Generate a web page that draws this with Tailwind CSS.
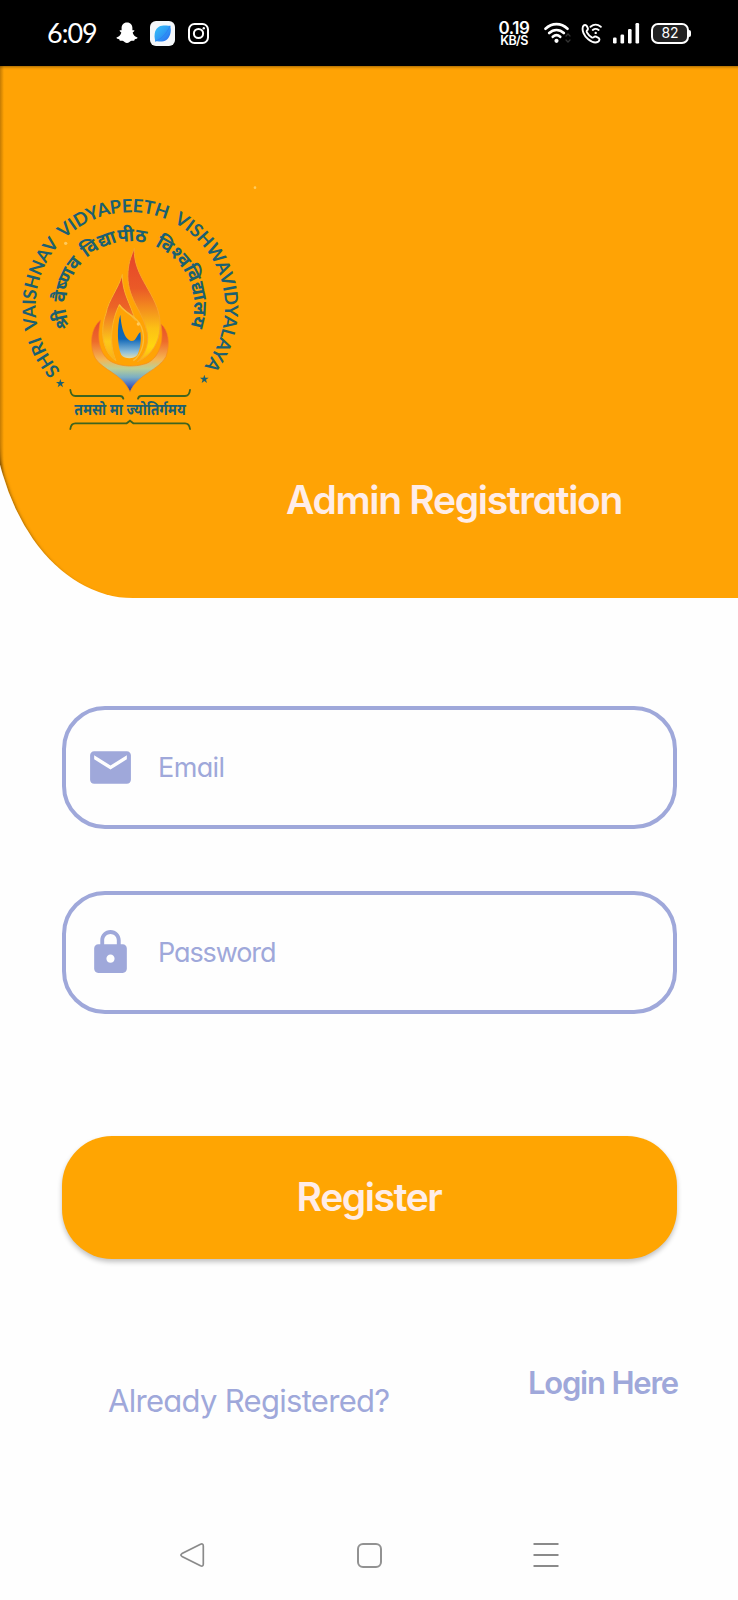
<!DOCTYPE html>
<html lang="en">
<head>
<meta charset="utf-8">
<meta name="viewport" content="width=device-width, initial-scale=1">
<title>Admin Registration</title>
<script src="https://cdn.jsdelivr.net/npm/@tailwindcss/browser@4"></script>
</head>
<body class="bg-white">
<div class="flex h-[1600px] w-[738px] flex-col overflow-hidden bg-[#fefefe] font-['Inter','Noto_Sans',sans-serif] [font-feature-settings:'cv11']">

  <!-- Status bar -->
  <div class="flex h-[66px] shrink-0 items-center bg-black pr-[47px] pl-[47px] text-white">
    <span class="-mt-px w-[69px] font-['Lato',sans-serif] text-[27px] leading-none tracking-[-1px]">6:09</span>
    <svg class="h-[22px] w-[22px]" viewBox="0 0 22 22"><path fill="#fff" d="M11 0.5c3.6 0 5.4 2.6 5.4 5.500v2.300c.6.2 1.600-.4 2 .3.300.9-1.800 1.400-1.700 2.200.6 2.200 2.300 4 4.800 4.700.3 1.200-1.800 1.500-2.700 1.800-.4.5-.2 1.400-.9 1.500-1 .1-2-.3-3 .2-1.200.7-2.200 1.900-3.900 1.900s-2.700-1.200-3.900-1.900c-1-.5-2-.1-3-.2-.7-.1-.5-1-.9-1.500-.9-.3-3-.6-2.700-1.800 2.500-.7 4.200-2.500 4.800-4.700.1-.8-2-1.300-1.700-2.200.4-.7 1.400-.1 2-.3V6C5.600 3.100 7.400.5 11 .5z"/></svg>
    <svg class="ml-[12px] h-[25px] w-[25px]" viewBox="0 0 25 25">
      <defs><linearGradient id="app" x1="0" y1="0" x2="1" y2="1"><stop offset="0" stop-color="#35c3f8"/><stop offset=".5" stop-color="#2f9df5"/><stop offset="1" stop-color="#2a62ee"/></linearGradient></defs>
      <rect width="25" height="25" rx="6" fill="#f4f7fa"/>
      <path fill="url(#app)" d="M20.500 4.500C20 6 21.500 8 20.500 12c-1 5-4 8-8.500 8.500-3 .3-5-.8-7 .2.500-2-1-4-.3-8C5.500 7.500 9 4.800 13.500 4.600c3-.1 5 .6 7-.1z"/>
      <path d="M5.500 20c6-2 11-7 14.500-15" stroke="#2b7df2" stroke-width=".8" fill="none"/>
    </svg>
    <svg class="ml-[13px] h-[21px] w-[21px]" viewBox="0 0 21 21" fill="none" stroke="#fff" stroke-width="2"><rect x="1" y="1" width="19" height="19" rx="5.500"/><circle cx="10.500" cy="10.500" r="4.600"/><circle cx="15.800" cy="5.200" r="1.200" fill="#fff" stroke="none"/></svg>

    <div class="ml-auto flex items-center">
      <div class="flex w-[32px] flex-col items-center font-semibold">
        <span class="text-[17px] leading-[15px] tracking-[-0.4px]">0.19</span>
        <span class="text-[12.500px] leading-[10px] tracking-[-0.600px]">KB/S</span>
      </div>
      <svg class="ml-[14px] h-[22px] w-[28px]" viewBox="0 0 28 22" fill="none" stroke="#fff" stroke-width="2.600" stroke-linecap="round">
        <path d="M1.500 6.800c6.400-6.200 15.600-6.200 22 0M5.200 11c4.300-4.100 10.300-4.100 14.600 0M8.800 14.800c2.300-2 5.100-2 7.400 0"/>
        <circle cx="12.500" cy="18.800" r="2.100" fill="#fff" stroke="none"/>
        <path d="M22 14l2-2 2 2M22 18l2 2 2-2" stroke="#333" stroke-width="1.300"/>
      </svg>
      <svg class="ml-[9px] h-[21px] w-[21px]" viewBox="0 0 21 21" fill="none" stroke="#fff" stroke-width="1.900" stroke-linecap="round" stroke-linejoin="round">
        <path d="M2 3.500C3 1.500 5 1.500 5.800 3l1 2.200c.4 1-.1 1.700-.8 2.300-.6.600-.4 1.300 0 2 1.200 2.200 2.700 3.700 4.800 4.900.8.400 1.400.4 2-.200.6-.7 1.400-1 2.300-.6l2.300 1.200c1.500.9 1.300 2.800-.2 3.800-2.400 1.500-6.200.7-10-2.400C3 13 .6 7.500 2 3.500z"/>
        <path d="M9.500 3.800c3.200-2.700 7.100-2.700 10.300 0M11.800 7c1.900-1.500 3.900-1.500 5.800 0"/>
        <circle cx="14.700" cy="9.900" r="1.200" fill="#fff" stroke="none"/>
      </svg>
      <svg class="ml-[11px] h-[21px] w-[27px]" viewBox="0 0 27 21" fill="#fff"><rect x="0" y="14.500" width="3.600" height="6" rx="1.200"/><rect x="7.500" y="11.500" width="3.600" height="9" rx="1.200"/><rect x="15" y="6" width="3.600" height="14.500" rx="1.200"/><rect x="22.500" y="0" width="3.600" height="20.500" rx="1.200"/></svg>
      <div class="ml-[11px] flex h-[21px] w-[38px] items-center justify-center rounded-[7px] border-2 border-white bg-[#222] text-[14px] leading-none">82</div>
      <div class="h-[7px] w-[2px] rounded-r-sm bg-white"></div>
    </div>
  </div>

  <!-- Header -->
  <header class="-ml-2 flex h-[532px] w-[746px] shrink-0 flex-col rounded-bl-[141px_200px] bg-[#ffa305] bg-[linear-gradient(90deg,rgba(70,40,0,.4)_7px,transparent_12px)] pl-2 shadow-[inset_3px_2px_3px_-1px_rgba(60,35,0,.5)]">
    <svg class="mt-[114px] h-[260px] w-[260px] shrink-0" viewBox="0 0 780 780">
      <defs>
        <path id="ringOuter" d="M182 573A284 284 0 1 1 611 560"/>
        <path id="ringInner" d="M210 443A192 192 0 1 1 570 443"/>
        <linearGradient id="flame" gradientUnits="userSpaceOnUse" x1="0" y1="220" x2="0" y2="550"><stop offset="0" stop-color="#e6452a"/><stop offset=".32" stop-color="#ea5a27"/><stop offset=".68" stop-color="#fcc015"/><stop offset=".85" stop-color="#ffd60f"/><stop offset="1" stop-color="#fbab18"/></linearGradient>
        <linearGradient id="flame2" gradientUnits="userSpaceOnUse" x1="0" y1="290" x2="0" y2="550"><stop offset="0" stop-color="#e6452a"/><stop offset=".35" stop-color="#ec6426"/><stop offset=".75" stop-color="#fcc81a"/><stop offset="1" stop-color="#fbab18"/></linearGradient>
        <linearGradient id="cup" gradientUnits="userSpaceOnUse" x1="0" y1="420" x2="0" y2="635"><stop offset="0" stop-color="#e5482b"/><stop offset=".3" stop-color="#ee6b2a"/><stop offset=".55" stop-color="#f6b552"/><stop offset=".68" stop-color="#b9cf98"/><stop offset=".8" stop-color="#7aaec4"/><stop offset=".9" stop-color="#4a6fc4"/><stop offset="1" stop-color="#26328a"/></linearGradient>
        <linearGradient id="core" gradientUnits="userSpaceOnUse" x1="0" y1="405" x2="0" y2="536"><stop offset="0" stop-color="#0b62a8"/><stop offset=".55" stop-color="#1268b8"/><stop offset=".85" stop-color="#8fc0dc"/><stop offset="1" stop-color="#e3dfae"/></linearGradient>
      </defs>
      <g fill="#1b6070" font-weight="700">
        <text font-family="Lato, sans-serif" font-size="55" word-spacing="12"><textPath href="#ringOuter" textLength="1296" lengthAdjust="spacing">SHRI VAISHNAV VIDYAPEETH VISHWAVIDYALAYA</textPath></text>
        <g font-family="'Noto Sans Devanagari','Noto Sans',sans-serif" font-size="56">
          <text><textPath href="#ringInner" startOffset="0">श्री</textPath></text>
          <text><textPath href="#ringInner" startOffset="76" textLength="134" lengthAdjust="spacingAndGlyphs">वैष्णव</textPath></text>
          <text><textPath href="#ringInner" startOffset="227" textLength="190" lengthAdjust="spacingAndGlyphs">विद्यापीठ</textPath></text>
          <text><textPath href="#ringInner" startOffset="445" textLength="290" lengthAdjust="spacingAndGlyphs">विश्&#8205;वविद्यालय</textPath></text>
        </g>
        <text x="223" y="706" font-family="'Noto Sans Devanagari','Noto Sans',sans-serif" font-size="46" textLength="334" lengthAdjust="spacingAndGlyphs">तमसो मा ज्योतिर्गमय</text>
        <path d="M181 597l3 9 10 0-8 6 3 10-8-6-8 6 3-10-8-6 10 0zM613 584l3 9 10 0-8 6 3 10-8-6-8 6 3-10-8-6 10 0z"/>
      </g>
      <path fill="url(#cup)" stroke="#f58a1c" stroke-width="2" d="M302 420C270 445 268 500 286 535C310 572 365 580 390 635C415 580 475 572 498 530C512 490 505 450 483 432C495 495 470 545 430 553C405 560 370 560 345 550C300 535 288 480 302 420z"/>
      <path fill="url(#flame)" stroke="#f9a62a" stroke-width="3" d="M403 205C398 290 476 345 480 425C483 490 450 530 412 545C440 520 450 480 438 445C425 390 378 350 384 275C386 245 395 225 403 205z"/>
      <path fill="url(#flame2)" stroke="#f9b52a" stroke-width="3" d="M367 283C366 340 392 370 406 422C390 402 372 392 358 374C335 420 325 490 348 542C305 515 300 450 318 400C325 360 356 325 367 283z"/>
      <path fill="none" stroke="#f9bd3a" stroke-width="4" d="M358 374C372 400 410 405 424 440C440 480 425 525 400 542"/>
      <path fill="url(#core)" d="M361 404C350 440 352 500 364 525C375 538 402 538 412 525C422 505 424 480 421 456C412 462 408 484 395 483C372 478 364 440 361 404z"/>
      <path fill="none" stroke="#3f641f" stroke-width="5.500" stroke-linecap="round" d="M211 630q2 18 15 18H360q8 0 10 8M570 630q-2 18 -15 18H424q-8 0 -10 8M211 747q2 -17 15 -17H380l10 -8l10 8H555q13 0 15 17"/>
      <g fill="#ffca5c"><circle cx="197" cy="190" r="5"/><circle cx="765" cy="23" r="4"/><circle cx="415" cy="432" r="5"/></g>
    </svg>
    <h1 class="mt-[36px] ml-[286px] text-[39px] leading-[48px] font-semibold tracking-[-1.300px] whitespace-nowrap text-[#ffede8]">Admin Registration</h1>
  </header>

  <!-- Form -->
  <form class="mt-[108px] flex shrink-0 flex-col px-[61.500px]">
    <label class="flex h-[123px] items-center gap-[23px] rounded-[43px] border-4 border-[#9fa8da] pl-[20.500px] text-[27px] text-[#9fa8da]">
      <svg class="h-[49px] w-[49px]" viewBox="0 0 24 24" fill="currentColor"><path d="M20 4H4c-1.100 0-1.990.9-1.990 2L2 18c0 1.100.9 2 2 2h16c1.100 0 2-.9 2-2V6c0-1.100-.9-2-2-2zm0 4l-8 5-8-5V6l8 5 8-5v2z"/></svg>
      <span class="mt-[2px] tracking-[-0.600px]">Email</span>
    </label>
    <label class="mt-[62px] flex h-[123px] items-center gap-[23px] rounded-[43px] border-4 border-[#9fa8da] pl-[20.500px] text-[27px] text-[#9fa8da]">
      <svg class="h-[49px] w-[49px]" viewBox="0 0 24 24" fill="currentColor"><path d="M18 8h-1V6c0-2.760-2.240-5-5-5S7 3.240 7 6v2H6c-1.100 0-2 .9-2 2v10c0 1.100.9 2 2 2h12c1.100 0 2-.9 2-2V10c0-1.100-.9-2-2-2zm-6 9c-1.100 0-2-.9-2-2s.9-2 2-2 2 .9 2 2-.9 2-2 2zm3.100-9H8.900V6c0-1.710 1.390-3.100 3.100-3.100 1.710 0 3.100 1.390 3.100 3.100v2z"/></svg>
      <span class="mt-[2px] tracking-[-1.100px]">Password</span>
    </label>
    <button type="button" class="mt-[122px] h-[123px] rounded-[50px] bg-[#ffa502] text-[39px] font-semibold tracking-[-1.400px] text-[#ffede8] shadow-[0_3px_5px_rgba(0,0,0,.24)]">Register</button>
  </form>

  <div class="mt-[104px] flex shrink-0 items-start justify-between pr-[60px] pl-[108px] text-[31px] leading-[40px] whitespace-nowrap text-[#9fa8da]">
    <span class="mt-[18px] tracking-[-0.700px]">Already Registered?</span>
    <a class="font-semibold tracking-[-1.200px]">Login Here</a>
  </div>

  <!-- Navigation bar -->
  <nav class="mt-auto mb-[30px] flex h-[30px] shrink-0 items-center justify-between pr-[178px] pl-[178px]">
    <svg class="h-[28px] w-[28px]" viewBox="0 0 28 28" fill="none" stroke="#8a8a8a" stroke-width="1.700" stroke-linejoin="round"><path d="M4 12.600L22.500 3.200q2.800-1 2.800 1.800v18q0 2.800-2.800 1.800L4 15.400q-2.200-1.400 0-2.800z"/></svg>
    <div class="h-[25px] w-[25px] rounded-[6px] border-2 border-[#929292]"></div>
    <svg class="h-[26px] w-[28px]" viewBox="0 0 28 26" stroke="#8a8a8a" stroke-width="2"><path d="M1.500 2h25M1.500 13h25M1.500 24h25"/></svg>
  </nav>
</div>
</body>
</html>
